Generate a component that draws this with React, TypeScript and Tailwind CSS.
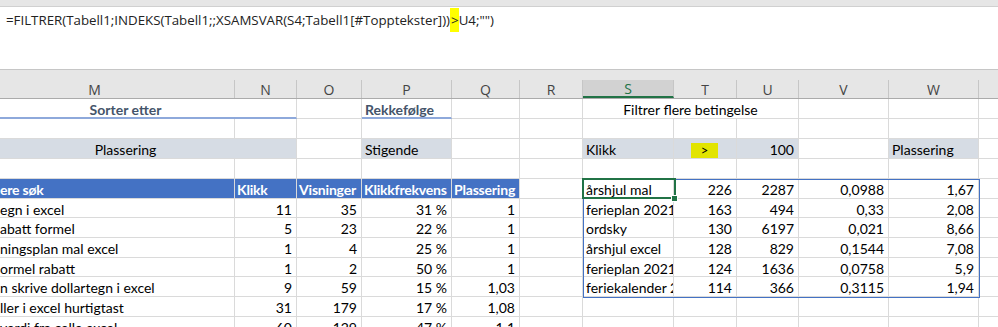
import React from "react";

const W = {
  M: 280,
  N: 62,
  O: 65,
  P: 90,
  Q: 68,
  R: 63,
  S: 91,
  T: 63,
  U: 62,
  V: 90,
  X: 64,
};

type CellProps = {
  w: number;
  className?: string;
  children?: React.ReactNode;
};

const Cell = ({ w, className = "", children }: CellProps) => (
  <div
    style={{ width: w }}
    className={`shrink-0 h-full flex items-center pt-[2px] overflow-hidden whitespace-nowrap border-r border-b border-[#DADADA] ${className}`}
  >
    {children}
  </div>
);

const gray = "bg-[#D6DCE4] border-[#D6DCE4]";
const blue = "bg-[#4472C4] border-[#4472C4] text-white font-bold tracking-[-0.2px]";

const Row = ({ h, children }: { h: string; children: React.ReactNode }) => (
  <div className={`flex ${h}`}>{children}</div>
);

const leftRows = [
  ["egn i excel", "11", "35", "31 %", "1"],
  ["abatt formel", "5", "23", "22 %", "1"],
  ["ningsplan mal excel", "1", "4", "25 %", "1"],
  ["ormel rabatt", "1", "2", "50 %", "1"],
  ["n skrive dollartegn i excel", "9", "59", "15 %", "1,03"],
  ["ller i excel hurtigtast", "31", "179", "17 %", "1,08"],
  ["verdi fra celle excel", "60", "129", "47 %", "1,1"],
];

const rightRows = [
  ["ferieplan 2021", "163", "494", "0,33", "2,08"],
  ["ordsky", "130", "6197", "0,021", "8,66"],
  ["årshjul excel", "128", "829", "0,1544", "7,08"],
  ["ferieplan 2021", "124", "1636", "0,0758", "5,9"],
  ["feriekalender 2021", "114", "366", "0,3115", "1,94"],
];

const headers: [string, number][] = [
  ["M", W.M],
  ["N", W.N],
  ["O", W.O],
  ["P", W.P],
  ["Q", W.Q],
  ["R", W.R],
  ["S", W.S],
  ["T", W.T],
  ["U", W.U],
  ["V", W.V],
  ["W", W.V],
  ["X", W.X],
];

export default function App() {
  return (
    <div className="relative w-[998px] h-[327px] overflow-hidden bg-white font-['Lato',sans-serif] text-[14px] text-black">
      {/* formula bar */}
      <div className="h-[7px] bg-[#E6E6E6] border-b border-[#D0D0D0]" />
      <div className="h-[62px] bg-white px-[6px] pt-[3px] font-['Open_Sans',sans-serif] text-[13.3px] text-[#222] leading-[20px] whitespace-nowrap">
        {"=FILTRER(Tabell1;INDEKS(Tabell1;;XSAMSVAR(S4;Tabell1[#Topptekster]))"}
        <span className="bg-[#FFFF00] py-[3px] pl-[1px]">&gt;</span>
        {'U4;"")'}
      </div>
      <div className="h-[11px] bg-[#E6E6E6] border-t border-[#C6C6C6]" />

      <div className="-ml-[45px]">
        {/* column headers */}
        <div className="flex h-[19px] bg-[#E6E6E6] border-b border-[#ABABAB] font-['Open_Sans',sans-serif] text-[14px] text-[#444]">
          {headers.map(([l, w]) => (
            <div
              key={l}
              style={{ width: w }}
              className={`shrink-0 flex items-center justify-center border-r border-[#C6C6C6] ${
                l === "S" ? "bg-[#D2D2D2] text-[#217346] border-b-2 border-b-[#217346]" : ""
              }`}
            >
              {l}
            </div>
          ))}
        </div>

        {/* row A */}
        <Row h="h-[20px]">
          <Cell w={W.M + W.N} className="justify-center font-bold text-[#44546A] border-b-2 border-b-[#8EA9DB]">
            Sorter etter
          </Cell>
          <Cell w={W.O} />
          <Cell w={W.P} className="pl-[3px] font-bold text-[#44546A] border-b-2 border-b-[#8EA9DB]">
            Rekkefølge
          </Cell>
          <Cell w={W.Q} />
          <Cell w={W.R} />
          <Cell w={W.S + W.T + W.U} className="justify-center">
            Filtrer flere betingelse
          </Cell>
          <Cell w={W.V} />
          <Cell w={W.V} />
          <Cell w={W.X} />
        </Row>

        {/* row B */}
        <Row h="h-[20px]">
          <Cell w={W.M} />
          <Cell w={W.N} />
          <Cell w={W.O} />
          <Cell w={W.P} />
          <Cell w={W.Q} />
          <Cell w={W.R} />
          <Cell w={W.S} />
          <Cell w={W.T} />
          <Cell w={W.U} />
          <Cell w={W.V} />
          <Cell w={W.V} />
          <Cell w={W.X} />
        </Row>

        {/* row C */}
        <Row h="h-[20px]">
          <Cell w={W.M + W.N} className={`justify-center ${gray}`}>
            Plassering
          </Cell>
          <Cell w={W.O} />
          <Cell w={W.P} className={`pl-[3px] ${gray}`}>
            Stigende
          </Cell>
          <Cell w={W.Q} />
          <Cell w={W.R} />
          <Cell w={W.S} className={`pl-[3px] ${gray}`}>
            Klikk
          </Cell>
          <Cell w={W.T} className={`items-end pt-0 pl-[17px] ${gray}`}>
            <span className="w-[27px] h-[15px] bg-[#E2E400] flex items-center justify-center text-[13px]">
              &gt;
            </span>
          </Cell>
          <Cell w={W.U} className={`justify-end pr-[4px] ${gray}`}>
            100
          </Cell>
          <Cell w={W.V} />
          <Cell w={W.V} className={`pl-[3px] ${gray}`}>
            Plassering
          </Cell>
          <Cell w={W.X} />
        </Row>

        {/* row D */}
        <Row h="h-[20px]">
          <Cell w={W.M} />
          <Cell w={W.N} />
          <Cell w={W.O} />
          <Cell w={W.P} />
          <Cell w={W.Q} />
          <Cell w={W.R} />
          <Cell w={W.S} />
          <Cell w={W.T} />
          <Cell w={W.U} />
          <Cell w={W.V} />
          <Cell w={W.V} />
          <Cell w={W.X} />
        </Row>

        {/* row E: table headers */}
        <Row h="h-[19.7px]">
          <Cell w={W.M} className={`pl-[45px] ${blue}`}>
            ere søk
          </Cell>
          <Cell w={W.N} className={`pl-[2px] ${blue}`}>
            Klikk
          </Cell>
          <Cell w={W.O} className={`pl-[2px] ${blue}`}>
            Visninger
          </Cell>
          <Cell w={W.P} className={`pl-[2px] ${blue}`}>
            Klikkfrekvens
          </Cell>
          <Cell w={W.Q} className={`pl-[2px] ${blue}`}>
            Plassering
          </Cell>
          <Cell w={W.R} />
          <Cell w={W.S} className="pl-[3px]">
            årshjul mal
          </Cell>
          <Cell w={W.T} className="justify-end pr-[4px]">
            226
          </Cell>
          <Cell w={W.U} className="justify-end pr-[4px]">
            2287
          </Cell>
          <Cell w={W.V} className="justify-end pr-[4px]">
            0,0988
          </Cell>
          <Cell w={W.V} className="justify-end pr-[4px]">
            1,67
          </Cell>
          <Cell w={W.X} />
        </Row>

        {leftRows.map((r, i) => {
          const rr = rightRows[i];
          return (
            <Row key={i} h="h-[19.7px]">
              <Cell w={W.M} className="pl-[45px]">
                {r[0]}
              </Cell>
              <Cell w={W.N} className="justify-end pr-[4px]">
                {r[1]}
              </Cell>
              <Cell w={W.O} className="justify-end pr-[4px]">
                {r[2]}
              </Cell>
              <Cell w={W.P} className="justify-end pr-[4px]">
                {r[3]}
              </Cell>
              <Cell w={W.Q} className="justify-end pr-[4px]">
                {r[4]}
              </Cell>
              <Cell w={W.R} />
              <Cell w={W.S} className="pl-[3px]">
                {rr ? rr[0] : ""}
              </Cell>
              <Cell w={W.T} className="justify-end pr-[4px]">
                {rr ? rr[1] : ""}
              </Cell>
              <Cell w={W.U} className="justify-end pr-[4px]">
                {rr ? rr[2] : ""}
              </Cell>
              <Cell w={W.V} className="justify-end pr-[4px]">
                {rr ? rr[3] : ""}
              </Cell>
              <Cell w={W.V} className="justify-end pr-[4px]">
                {rr ? rr[4] : ""}
              </Cell>
              <Cell w={W.X} />
            </Row>
          );
        })}
      </div>

      {/* filtered range outline and active cell */}
      <div className="absolute left-[583px] top-[179px] w-[397px] h-[119px] border border-[#4472C4] pointer-events-none" />
      <div className="absolute left-[582px] top-[178px] w-[94px] h-[21px] border-2 border-[#217346] pointer-events-none" />
      <div className="absolute left-[671px] top-[195px] w-[7px] h-[7px] bg-[#217346] border border-white" />
    </div>
  );
}
